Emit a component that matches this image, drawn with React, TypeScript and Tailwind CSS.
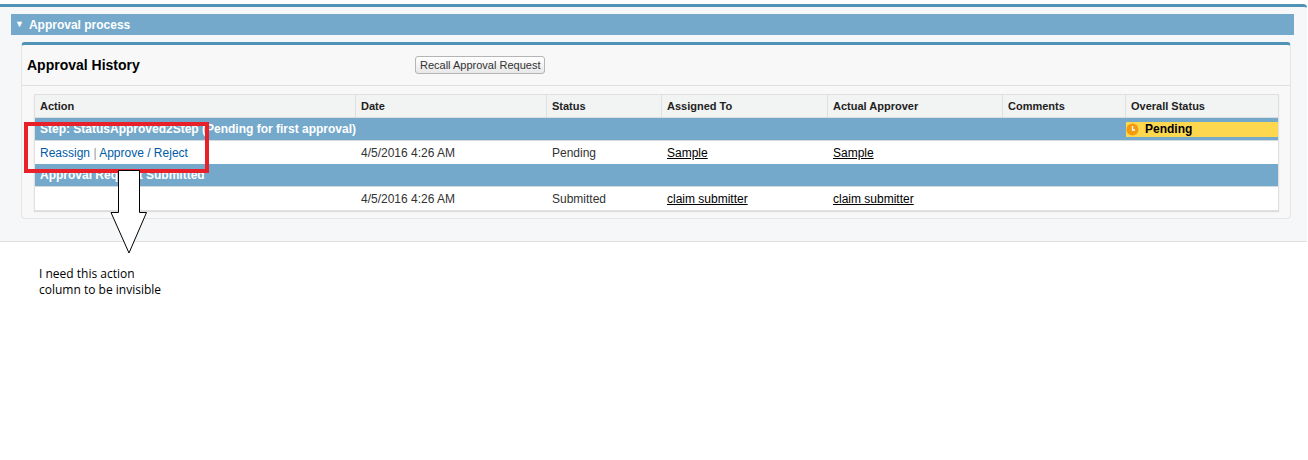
export default function App() {
  const cols = ["w-[321px]", "w-[191px]", "w-[115px]", "w-[166px]", "w-[175px]", "w-[123px]", "flex-1"];
  const heads = ["Action", "Date", "Status", "Assigned To", "Actual Approver", "Comments", "Overall Status"];
  const Row = ({ cells }: { cells: React.ReactNode[] }) => (
    <div className="flex h-[23px] items-center bg-white text-[12px] text-[#333]">
      {cells.map((c, i) => (
        <div key={i} className={`${cols[i]} px-[5px] shrink-0`}>{c}</div>
      ))}
    </div>
  );
  return (
    <div className="relative w-[1308px] h-[460px] bg-white" style={{ fontFamily: '"Liberation Sans", Arial, sans-serif' }}>
      <div className="pt-[4px] w-[1307px]">
        <div className="border-t-[3px] border-[#4f93b6] bg-[#f5f7f9] border-b border-b-[#e0e0e0] rounded-tr-[4px] pt-[7px] pb-[22px] h-[238px]">
          <div className="ml-[11px] w-[1283px] h-[21px] bg-[#74a9cb] flex items-center pl-[4px] text-white font-bold text-[12px]">
            <span className="text-[9px] mr-[5px]">▼</span>Approval process
          </div>
          <div className="ml-[21px] mt-[7px] w-[1270px] h-[177px] border-t-[3px] border-[#4f93b6] rounded-t-[4px] bg-[#f8f8f8] border-x border-b border-x-[#e5e5e5] border-b-[#e5e5e5] rounded-b-[4px]">
            <div className="h-[41px] flex items-center border-b border-[#e0e0e0] relative">
              <div className="pl-[5px] w-[393px] text-[14px] font-bold text-black">Approval History</div>
              <button className="h-[18px] px-[4px] text-[11px] text-[#333] border border-[#b5b5b5] rounded-[3px] bg-gradient-to-b from-white to-[#e8e8e8]">Recall Approval Request</button>
            </div>
            <div className="mt-[8px] ml-[12px] w-[1245px] border border-[#e0e0e0] shadow-[0_1px_1px_#ddd]">
              <div className="flex h-[23px] items-center bg-[#f2f3f3] text-[11px] font-bold text-[#222] border-b border-[#ddd]">
                {heads.map((h, i) => (
                  <div key={i} className={`${cols[i]} px-[5px] shrink-0 h-full flex items-center ${i < 6 ? "border-r border-[#e0e0e0]" : ""}`}>{h}</div>
                ))}
              </div>
              <div className="flex h-[23px] items-center bg-[#74a9cb] text-white font-bold text-[12px] border-b border-[#d4dadc]">
                <div className="w-[1091px] px-[5px]">Step: StatusApproved2Step (Pending for first approval)</div>
                <div className="flex-1 h-[15px] bg-[#fdd84f] flex items-center text-black font-normal gap-[6px]">
                  <svg width="13" height="13" viewBox="0 0 13 13"><circle cx="6.5" cy="6.5" r="6" fill="#f39c12" /><path d="M6.5 3v4h2.5" stroke="#fff" strokeWidth="1.3" fill="none" /></svg>
                  <span className="font-bold">Pending</span>
                </div>
              </div>
              <Row cells={[<span className="text-[#015ba7]">Reassign <span className="text-[#999]">|</span> Approve / Reject</span>, "4/5/2016 4:26 AM", "Pending", <span className="underline text-black">Sample</span>, <span className="underline text-black">Sample</span>, "", ""]} />
              <div className="flex h-[23px] items-center bg-[#74a9cb] text-white font-bold text-[12px] px-[5px] border-b border-[#d4dadc]">Approval Request Submitted</div>
              <Row cells={["", "4/5/2016 4:26 AM", "Submitted", <span className="underline text-black">claim submitter</span>, <span className="underline text-black">claim submitter</span>, "", ""]} />
            </div>
          </div>
        </div>
      </div>
      <div className="absolute left-[24px] top-[122px] w-[185px] h-[51px] border-[4px] border-[#e8202a]" />
      <svg className="absolute left-[108px] top-[168px]" width="42" height="90" viewBox="0 0 42 90">
        <path d="M10.5 2.5 H31.5 V44.5 H38.5 L21 85 L3 44.5 H10.5 Z" fill="white" stroke="black" strokeWidth="1" />
      </svg>
      <div className="absolute left-[39px] top-[266px] text-[12px] leading-[16px] text-black" style={{ fontFamily: '"Open Sans", "Liberation Sans", sans-serif' }}>
        I need this action<br />column to be invisible
      </div>
    </div>
  );
}
